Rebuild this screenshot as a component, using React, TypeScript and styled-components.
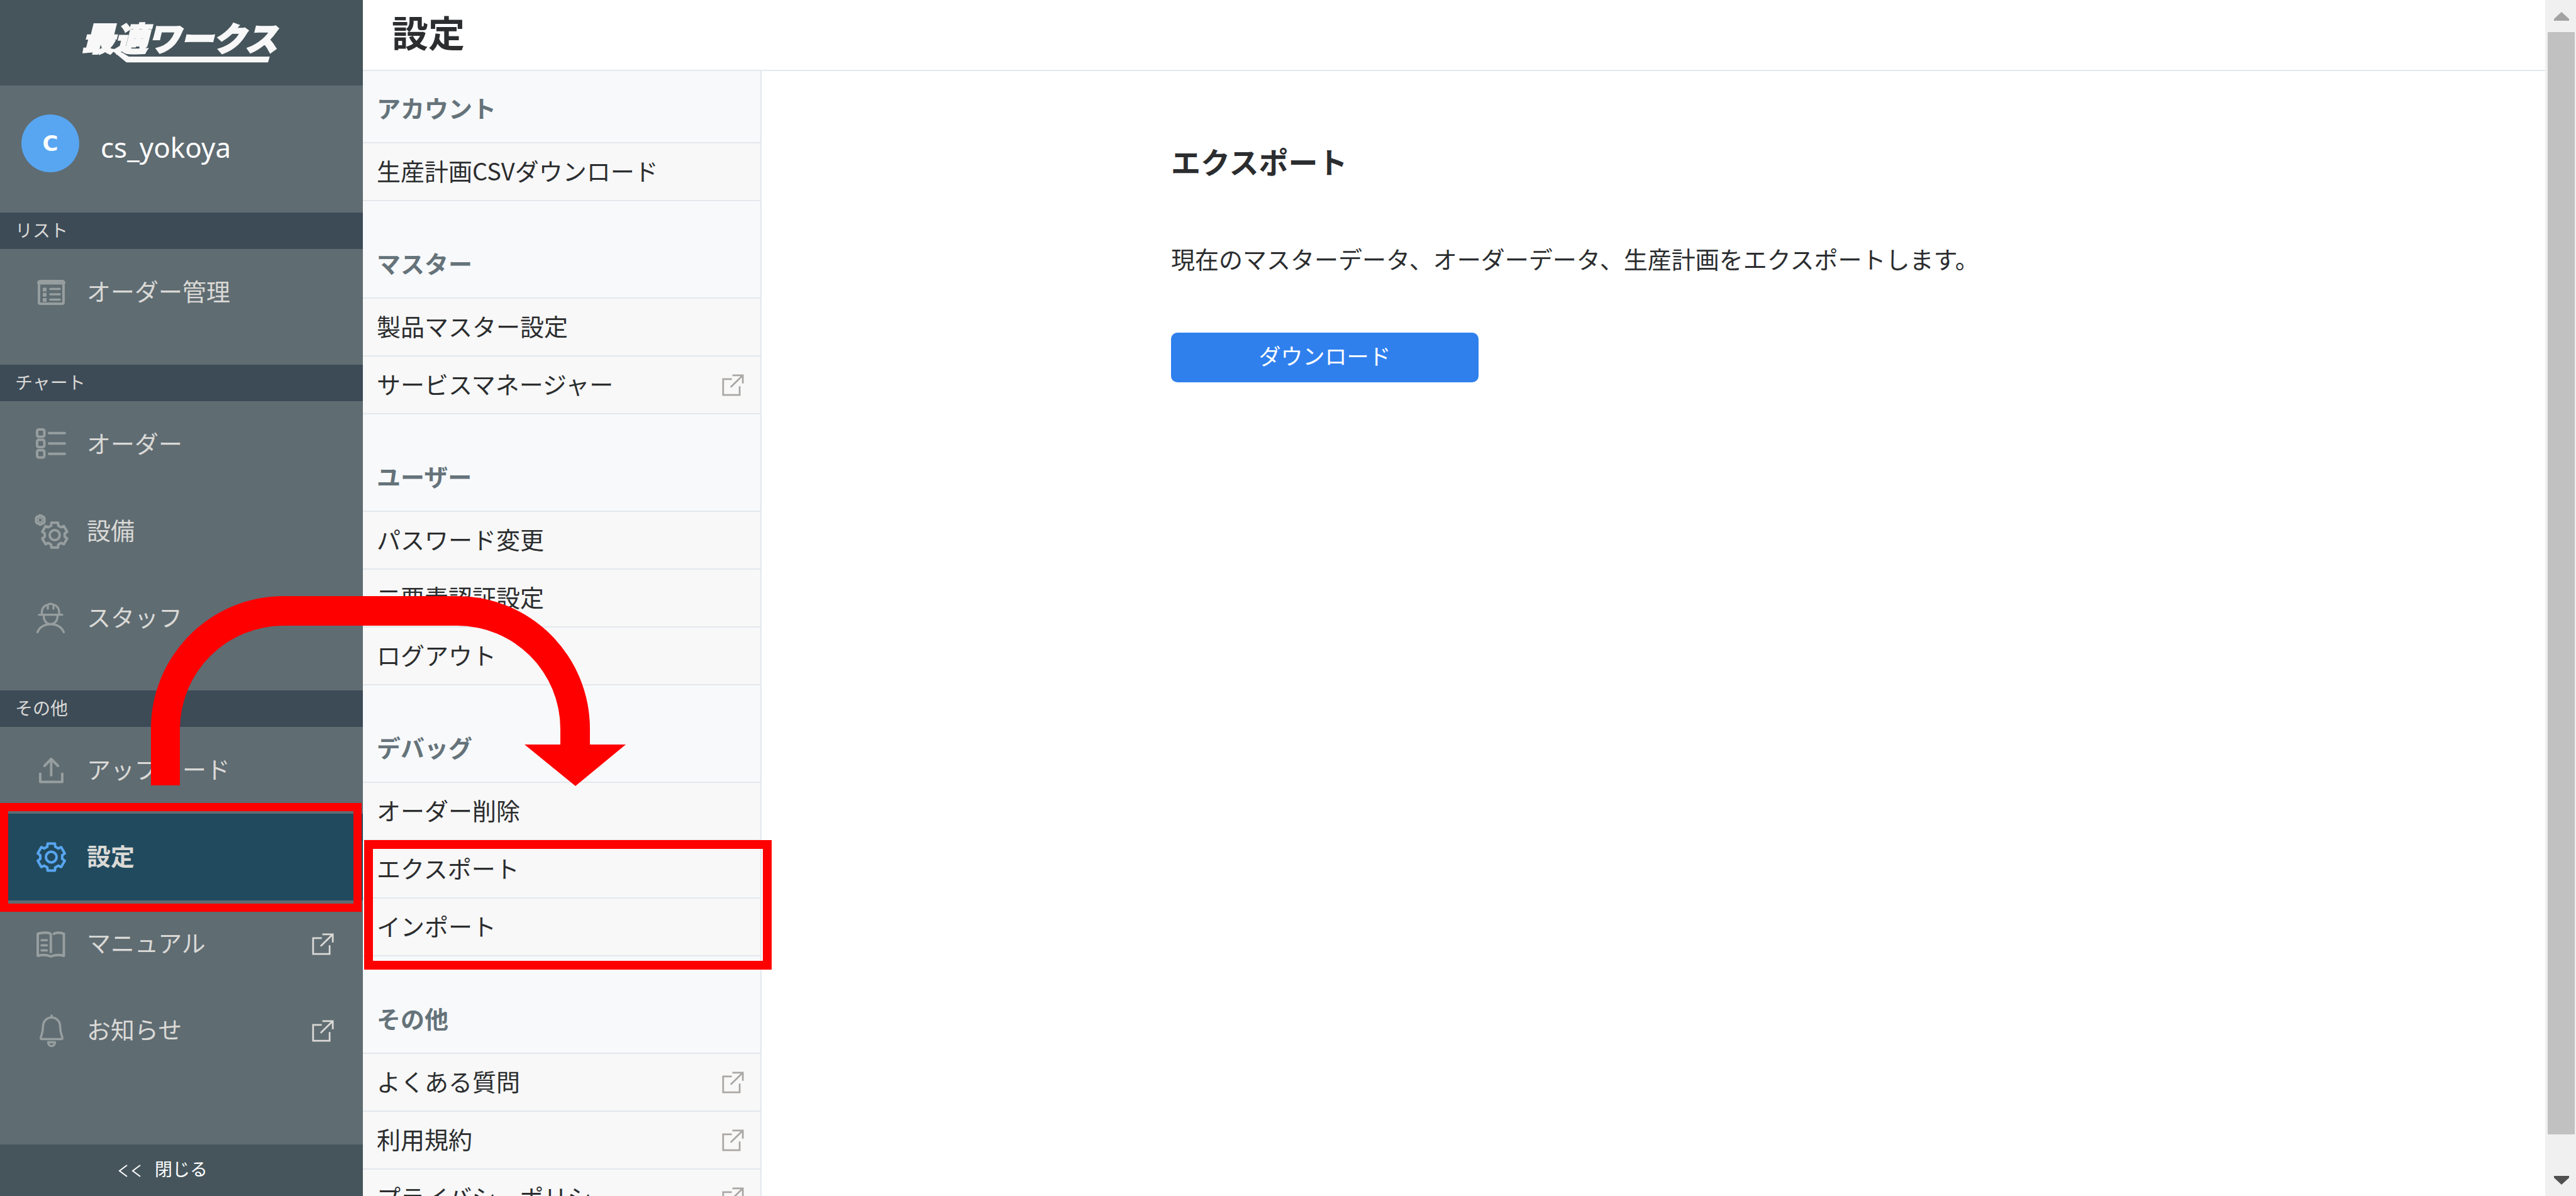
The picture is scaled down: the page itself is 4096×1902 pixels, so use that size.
import React from "react";
import styled, { createGlobalStyle } from "styled-components";

const GlobalStyle = createGlobalStyle`
  *, *::before, *::after { box-sizing: border-box; }
  html, body { margin: 0; padding: 0; background: #fff; }
  body {
    font-family: "Noto Sans", "Noto Sans CJK JP", sans-serif;
    color: #2b2d2f;
    overflow: hidden;
  }
  ul { list-style: none; margin: 0; padding: 0; }
  h1, h2, h3, p { margin: 0; }
  a { color: inherit; text-decoration: none; }
  svg { display: block; flex: none; }
`;

const RED = "#ff0000";
const jp = `"Noto Sans CJK JP", "Noto Sans", sans-serif`;

const Shell = styled.div`
  position: relative;
  display: flex;
  height: 100vh;
  overflow: hidden;
  font-family: ${jp};
`;

/* ---------- sidebar ---------- */

const Sidebar = styled.nav`
  display: flex;
  flex-direction: column;
  flex: none;
  width: 577px;
  background: #5f6c72;
  color: #dad9d6;
`;

const Brand = styled.div`
  display: flex;
  align-items: center;
  justify-content: center;
  height: 136px;
  background: #46555c;
`;

const Profile = styled.div`
  display: flex;
  align-items: center;
  gap: 34px;
  height: 202px;
  padding-left: 34px;
`;

const Avatar = styled.span`
  display: flex;
  align-items: center;
  justify-content: center;
  width: 92px;
  height: 92px;
  margin-bottom: 18px;
  border-radius: 50%;
  background: #58a6f1;
  color: #fff;
  font-family: "DejaVu Sans", sans-serif;
  font-size: 34px;
  font-weight: 700;
`;

const UserName = styled.span`
  padding-bottom: 6px;
  color: #fff;
  font-family: "Noto Sans", sans-serif;
  font-size: 44px;
  line-height: 60px;
`;

const NavHeading = styled.h2`
  height: 58px;
  padding-left: 24px;
  background: #3d4b57;
  font-size: 28px;
  font-weight: 400;
  line-height: 54px;
`;

const NavList = styled.ul<{ $last?: boolean }>`
  padding-bottom: ${(p) => (p.$last ? 0 : 46)}px;
`;

const NavItem = styled.li`
  position: relative;
`;

const NavLink = styled.a<{ $active?: boolean }>`
  display: flex;
  align-items: center;
  gap: 28px;
  height: 138px;
  padding: 0 46px 0 54px;
  background: ${(p) => (p.$active ? "#214a5e" : "transparent")};
  font-size: 38px;
  font-weight: ${(p) => (p.$active ? 700 : 400)};
  line-height: 56px;

  > svg:first-child {
    color: ${(p) => (p.$active ? "#58a6f1" : "#979e9f")};
  }
`;

const NavLabel = styled.span`
  flex: 1;
  padding-bottom: 6px;
`;

const Collapse = styled.button`
  display: flex;
  align-items: center;
  gap: 22px;
  height: 82px;
  margin-top: auto;
  padding: 2px 0 0 188px;
  border: 0;
  background: #46555c;
  color: #fff;
  font-family: ${jp};
  font-size: 28px;
  line-height: 40px;
`;

const CollapseLabel = styled.span`
  padding-bottom: 8px;
`;

/* ---------- main area ---------- */

const Main = styled.main`
  display: flex;
  flex-direction: column;
  flex: 1;
  min-width: 0;
`;

const PageHeader = styled.header`
  flex: none;
  height: 113px;
  padding-left: 46px;
  border-bottom: 2px solid #e3e8ed;
`;

const PageTitle = styled.h1`
  font-size: 58px;
  font-weight: 700;
  line-height: 100px;
`;

const Body = styled.div`
  display: flex;
  flex: 1;
  min-height: 0;
`;

const Panel = styled.aside`
  flex: none;
  width: 634px;
  border-right: 2px solid #e3e8ed;
  background: #f8f9fb;
`;

const GroupTitle = styled.h3<{ $first?: boolean }>`
  display: flex;
  align-items: flex-end;
  height: ${(p) => (p.$first ? 115 : 155)}px;
  padding: 0 0 27px 22px;
  border-bottom: 2px solid #e3e8ed;
  color: #65737a;
  font-size: 38px;
  font-weight: 700;
  line-height: 56px;
`;

const Row = styled.a`
  display: flex;
  align-items: center;
  justify-content: space-between;
  height: 92px;
  padding: 0 26px 0 22px;
  border-bottom: 2px solid #e3e8ed;
  background: #f8f8f8;
  font-size: 38px;
  line-height: 56px;

  svg { color: #aaa7a4; }
`;

const RowLabel = styled.span`
  padding-bottom: 4px;
`;

const Marked = styled.div`
  position: relative;
`;

const Highlight = styled.span<{ $inset: string; $stroke: number }>`
  position: absolute;
  inset: ${(p) => p.$inset};
  border: ${(p) => p.$stroke}px solid ${RED};
  pointer-events: none;
`;

const Content = styled.section`
  flex: 1;
  min-width: 0;
  padding: 108px 40px 0;
`;

const Column = styled.div`
  display: flex;
  flex-direction: column;
  align-items: flex-start;
  max-width: 1534px;
  margin: 0 auto;
`;

const SectionTitle = styled.h2`
  font-size: 47px;
  font-weight: 700;
  line-height: 70px;
`;

const Description = styled.p`
  margin-top: 90px;
  font-size: 38px;
  line-height: 60px;
`;

const DownloadButton = styled.button`
  width: 489px;
  height: 79px;
  margin-top: 88px;
  padding: 0 0 8px;
  border: 0;
  border-radius: 10px;
  background: #2f80ed;
  color: #fff;
  font-family: ${jp};
  font-size: 35px;
`;

/* ---------- scrollbar ---------- */

const Scrollbar = styled.div`
  display: flex;
  flex-direction: column;
  flex: none;
  width: 49px;
  background: #f0f0f0;
`;

const ScrollEnd = styled.div`
  display: flex;
  align-items: center;
  justify-content: center;
  height: 51px;
  padding-left: 2px;
`;

const ScrollTrack = styled.div`
  flex: 1;
  padding: 0 2px 0 4px;
`;

const Thumb = styled.div`
  height: 97.4%;
  background: #c1c1c1;
`;

const CurvedArrow = styled.svg`
  position: absolute;
  left: 240px;
  top: 948px;
  pointer-events: none;
`;

/* ---------- icons ---------- */

function gearPath(cx: number, cy: number, outer: number, inner: number) {
  const pts: string[] = [];
  for (let i = 0; i < 6; i++) {
    const steps: [number, number][] = [
      [-15, outer],
      [15, outer],
      [21, inner],
      [39, inner],
    ];
    steps.forEach(([offset, r]) => {
      const a = ((i * 60 + offset - 90) * Math.PI) / 180;
      pts.push(`${(cx + r * Math.cos(a)).toFixed(1)} ${(cy + r * Math.sin(a)).toFixed(1)}`);
    });
  }
  return `M${pts.join("L")}Z`;
}

const Icon = ({ children }: { children: React.ReactNode }) => (
  <svg
    width="56"
    height="56"
    viewBox="0 0 56 56"
    fill="none"
    stroke="currentColor"
    strokeWidth="4"
    strokeLinecap="round"
    strokeLinejoin="round"
    aria-hidden="true"
  >
    {children}
  </svg>
);

const icons = {
  table: (
    <Icon>
      <rect x="8" y="10" width="39" height="36" rx="2" />
      <path d="M8 12.5H47" strokeWidth="6" />
      <path d="M17 20.5V43" strokeWidth="6" strokeDasharray="6 2.3" strokeLinecap="butt" />
      <path d="M26 22.5H41M26 31H41M26 39.5H41" strokeWidth="3.6" />
    </Icon>
  ),
  list: (
    <Icon>
      <rect x="5" y="4" width="11.5" height="11.5" rx="2.5" />
      <rect x="5" y="20.5" width="11.5" height="11.5" rx="2.5" />
      <rect x="5" y="37" width="11.5" height="11.5" rx="2.5" />
      <path d="M24 9.7H49M24 26.2H49M24 42.7H49" />
    </Icon>
  ),
  gears: (
    <Icon>
      <path d={gearPath(33, 34, 20.5, 16)} />
      <circle cx="33" cy="34" r="8" />
      <path d={gearPath(10, 10, 7.5, 6)} strokeWidth="3.6" />
      <circle cx="10" cy="10" r="3.2" strokeWidth="2" />
    </Icon>
  ),
  worker: (
    <Icon>
      <g strokeWidth="3.4">
        <path d="M12.5 22V18.5C12.5 12 17 7.5 22 6.6Q26.5 4 31 6.6C36 7.5 40 12 40 18.5V22" />
        <path d="M8 22.6H45" />
        <path d="M15.5 24C15.5 32.5 20 37.5 26.5 37.5S37.5 32.5 37.5 24" />
        <path d="M22 8V13M31 8V13" />
        <path d="M5.5 50.5C9 42.5 16.5 37.8 26.5 37.8S44 42.5 47.5 50.5" />
      </g>
    </Icon>
  ),
  upload: (
    <Icon>
      <path d="M27.4 36V10M16.8 21L27.4 10L38.3 21" />
      <path d="M10 32V46.5H45V32" strokeLinecap="butt" />
    </Icon>
  ),
  gear: (
    <Icon>
      <path d={gearPath(27.5, 28, 22.3, 17.6)} />
      <circle cx="27.5" cy="28" r="8.5" />
    </Icon>
  ),
  book: (
    <Icon>
      <path d="M26.8 41V14Q26.8 11 22 10.5Q13 9.5 6 12V47Q17 44 26.8 48Q37 44 47.5 47V12Q38 8.5 31.5 12" />
      <path d="M12 22.2H20.5M12 30.4H20.5M12 38.4H20.5" strokeWidth="3.6" />
    </Icon>
  ),
  bell: (
    <Icon>
      <g strokeWidth="3.6">
        <path d="M28 4V7C19 7.5 14.5 14 14.3 22C14.2 32 12 34.5 10.8 39Q10.5 41.5 12.5 41.5H43.5Q45.5 41.5 45.2 39C44 34.5 41.8 32 41.7 22C41.5 14 37 7.5 28 7" />
        <path d="M22.5 46.5H33.5C33 54.5 23 54.5 22.5 46.5Z" />
      </g>
    </Icon>
  ),
};

const ExternalIcon = () => (
  <svg width="35" height="35" viewBox="0 0 38 38" fill="none" stroke="currentColor" strokeWidth="3" aria-hidden="true">
    <path d="M17 8.5H2V36H30.5V21" />
    <path d="M18 2H36V16M15 22.5L35.5 2.5" />
  </svg>
);

const Logo = () => (
  <svg width="335" height="93" viewBox="0 0 360 100" fill="#f8f8f8" role="img" aria-label="最適ワークス">
    <text
      x="10"
      y="63"
      fontFamily="Noto Sans CJK JP, sans-serif"
      fontSize="56"
      fontWeight="900"
      fontStyle="italic"
      stroke="#f8f8f8"
      strokeWidth="2.5"
    >
      最適ワークス
    </text>
    <path d="M58 60L68 60L90 73H331L328 83H86Z" />
  </svg>
);

/* ---------- data ---------- */

type NavEntry = { label: string; icon: keyof typeof icons; active?: boolean; external?: boolean };

const navGroups: { title: string; items: NavEntry[] }[] = [
  { title: "リスト", items: [{ label: "オーダー管理", icon: "table" }] },
  {
    title: "チャート",
    items: [
      { label: "オーダー", icon: "list" },
      { label: "設備", icon: "gears" },
      { label: "スタッフ", icon: "worker" },
    ],
  },
  {
    title: "その他",
    items: [
      { label: "アップロード", icon: "upload" },
      { label: "設定", icon: "gear", active: true },
      { label: "マニュアル", icon: "book", external: true },
      { label: "お知らせ", icon: "bell", external: true },
    ],
  },
];

type Setting = { label: string; external?: boolean };

const settingGroups: { title: string; items: Setting[]; marked?: Setting[] }[] = [
  { title: "アカウント", items: [{ label: "生産計画CSVダウンロード" }] },
  {
    title: "マスター",
    items: [{ label: "製品マスター設定" }, { label: "サービスマネージャー", external: true }],
  },
  {
    title: "ユーザー",
    items: [{ label: "パスワード変更" }, { label: "二要素認証設定" }, { label: "ログアウト" }],
  },
  {
    title: "デバッグ",
    items: [{ label: "オーダー削除" }],
    marked: [{ label: "エクスポート" }, { label: "インポート" }],
  },
  {
    title: "その他",
    items: [
      { label: "よくある質問", external: true },
      { label: "利用規約", external: true },
      { label: "プライバシーポリシー", external: true },
    ],
  },
];

const SettingRow = ({ label, external }: Setting) => (
  <Row href="#">
    <RowLabel>{label}</RowLabel>
    {external && <ExternalIcon />}
  </Row>
);

export default function App() {
  return (
    <>
      <GlobalStyle />
      <Shell>
        <Sidebar>
          <Brand>
            <Logo />
          </Brand>
          <Profile>
            <Avatar>C</Avatar>
            <UserName>cs_yokoya</UserName>
          </Profile>
          {navGroups.map((group, i) => (
            <React.Fragment key={group.title}>
              <NavHeading>{group.title}</NavHeading>
              <NavList $last={i === navGroups.length - 1}>
                {group.items.map((item) => (
                  <NavItem key={item.label}>
                    <NavLink href="#" $active={item.active}>
                      {icons[item.icon]}
                      <NavLabel>{item.label}</NavLabel>
                      {item.external && <ExternalIcon />}
                    </NavLink>
                    {item.active && <Highlight $inset="-17px 2px -18px 0" $stroke={13} />}
                  </NavItem>
                ))}
              </NavList>
            </React.Fragment>
          ))}
          <Collapse type="button">
            <svg width="36" height="20" viewBox="0 0 36 20" fill="none" stroke="currentColor" strokeWidth="2" aria-hidden="true">
              <path d="M14 1L2 10L14 19M35 1L23 10L35 19" />
            </svg>
            <CollapseLabel>閉じる</CollapseLabel>
          </Collapse>
        </Sidebar>

        <Main>
          <PageHeader>
            <PageTitle>設定</PageTitle>
          </PageHeader>
          <Body>
            <Panel>
              {settingGroups.map((group, i) => (
                <React.Fragment key={group.title}>
                  <GroupTitle $first={i === 0}>{group.title}</GroupTitle>
                  {group.items.map((item) => (
                    <SettingRow key={item.label} {...item} />
                  ))}
                  {group.marked && (
                    <Marked>
                      {group.marked.map((item) => (
                        <SettingRow key={item.label} {...item} />
                      ))}
                      <Highlight $inset="-1px -18px -21px 2px" $stroke={14} />
                    </Marked>
                  )}
                </React.Fragment>
              ))}
            </Panel>
            <Content>
              <Column>
                <SectionTitle>エクスポート</SectionTitle>
                <Description>
                  現在のマスターデータ、オーダーデータ、生産計画をエクスポートします。
                </Description>
                <DownloadButton type="button">ダウンロード</DownloadButton>
              </Column>
            </Content>
          </Body>
        </Main>

        <Scrollbar aria-hidden="true">
          <ScrollEnd>
            <svg width="24" height="14" viewBox="0 0 24 14" fill="#a3a3a3">
              <path d="M12 0L24 11V14H0V11Z" />
            </svg>
          </ScrollEnd>
          <ScrollTrack>
            <Thumb />
          </ScrollTrack>
          <ScrollEnd>
            <svg width="24" height="14" viewBox="0 0 24 14" fill="#505050">
              <path d="M12 14L24 3V0H0V3Z" />
            </svg>
          </ScrollEnd>
        </Scrollbar>

        <CurvedArrow width="756" height="303" viewBox="0 0 756 303" fill={RED} aria-hidden="true">
          <path d="M0 301V211A211 211 0 0 1 211 0H487A211 211 0 0 1 698 211V236H755L675 302L594 236H651V211A164 164 0 0 0 487 47H211A165 165 0 0 0 46 211V301Z" />
        </CurvedArrow>
      </Shell>
    </>
  );
}
